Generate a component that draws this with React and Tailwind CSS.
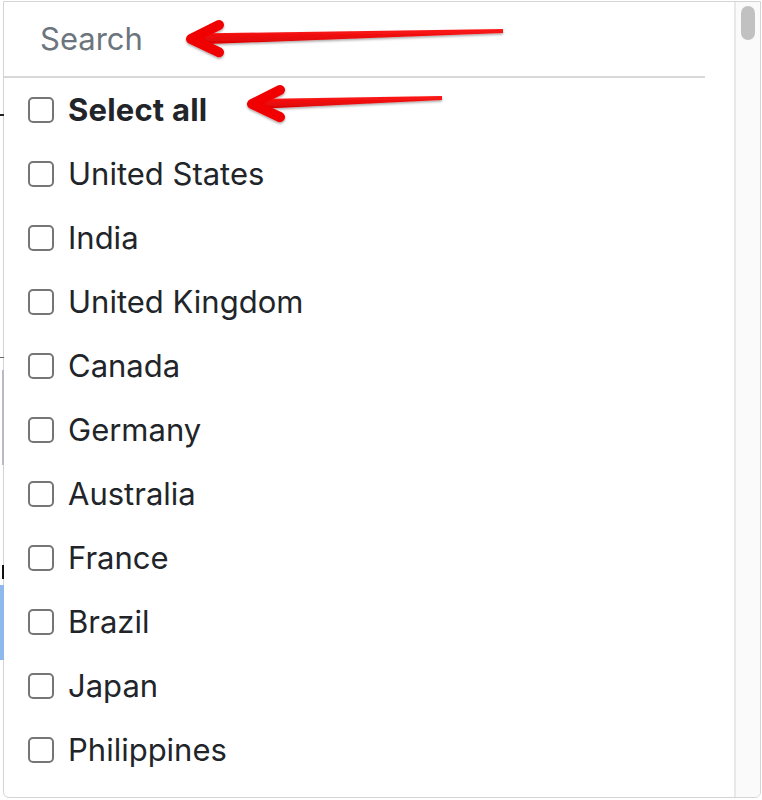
const countries = [
  "United States",
  "India",
  "United Kingdom",
  "Canada",
  "Germany",
  "Australia",
  "France",
  "Brazil",
  "Japan",
  "Philippines",
];

function Box() {
  return <span className="block h-[26px] w-[26px] shrink-0 rounded-[5px] border-2 border-[#767676] bg-white" />;
}

function Arrow({ tip, tail, barb, thick }) {
  // tip/tail are [x,y]; shaft tapers from thick at the head to thin at the tail
  const [tx, ty] = tip;
  const [ex, ey] = tail;
  const hx = tx + barb;
  const hy = ty - ((ty - ey) * barb) / (ex - tx);
  return (
    <g filter="url(#sh)">
      <polygon
        points={`${tx + 4},${ty - thick / 2} ${ex},${ey - 2} ${ex},${ey + 2} ${tx + 4},${ty + thick / 2}`}
        fill="url(#rg)"
      />
      <polyline
        points={`${hx},${ty - 14} ${tx},${ty} ${hx},${hy + 14}`}
        fill="none"
        stroke="#f00000"
        strokeWidth="10"
        strokeLinecap="round"
        strokeLinejoin="round"
      />
    </g>
  );
}

export default function App() {
  return (
    <div className="relative h-[800px] w-[762px] overflow-hidden bg-white" style={{ fontFamily: "Inter, 'Noto Sans', sans-serif" }}>
      {/* bits of the page behind the dropdown */}
      <div className="absolute left-0 top-[114px] h-[2px] w-[4px] bg-[#222]" />
      <div className="absolute left-0 top-[357px] h-[1px] w-[4px] bg-[#666]" />
      <div className="absolute left-[2px] top-[370px] h-[95px] w-[2px] bg-[#b8bcc2]" />
      <div className="absolute left-[2px] top-[565px] h-[14px] w-[2px] bg-[#111]" />
      <div className="absolute left-0 top-[585px] h-[75px] w-[4px] bg-[#8fb8ec]" />

      <div className="ml-[3px] mt-[1px] flex h-[797px] w-[758px] overflow-hidden rounded-b-[6px] border border-[#d4d4d4] bg-white">
        <div className="flex min-w-0 flex-1 flex-col pr-[29px]">
          <div className="flex h-[76px] shrink-0 items-center border-b-2 border-[#d8d8d8] pl-[36px]">
            <span className="text-[31px] text-[#6c757d]">Search</span>
          </div>
          <ul className="flex flex-col">
            <li className="flex h-16 items-center gap-[14px] pl-[24px]">
              <Box />
              <span className="text-[31px] font-bold tracking-[0.2px] text-[#212529]">Select all</span>
            </li>
            {countries.map((c) => (
              <li key={c} className="flex h-16 items-center gap-[14px] pl-[24px]">
                <Box />
                <span className="text-[31px] text-[#212529]">{c}</span>
              </li>
            ))}
          </ul>
        </div>
        <div className="flex w-[26px] shrink-0 justify-center border-l-2 border-[#e8e8e8] bg-[#fafafa] pt-[4px]">
          <div className="h-[34px] w-[14px] rounded-full bg-[#c1c1c1]" />
        </div>
      </div>

      <svg className="pointer-events-none absolute inset-0" width="762" height="800" viewBox="0 0 762 800">
        <defs>
          <linearGradient id="rg" x1="0" y1="0" x2="0" y2="1">
            <stop offset="0" stopColor="#ff1a1a" />
            <stop offset="1" stopColor="#d90000" />
          </linearGradient>
          <filter id="sh" x="-10%" y="-50%" width="120%" height="200%">
            <feDropShadow dx="0" dy="1.5" stdDeviation="1" floodColor="#000" floodOpacity="0.35" />
          </filter>
        </defs>
        <Arrow tip={[191, 39]} tail={[503, 31]} barb={28} thick={11} />
        <Arrow tip={[252, 104]} tail={[442, 98]} barb={28} thick={10} />
      </svg>
    </div>
  );
}
